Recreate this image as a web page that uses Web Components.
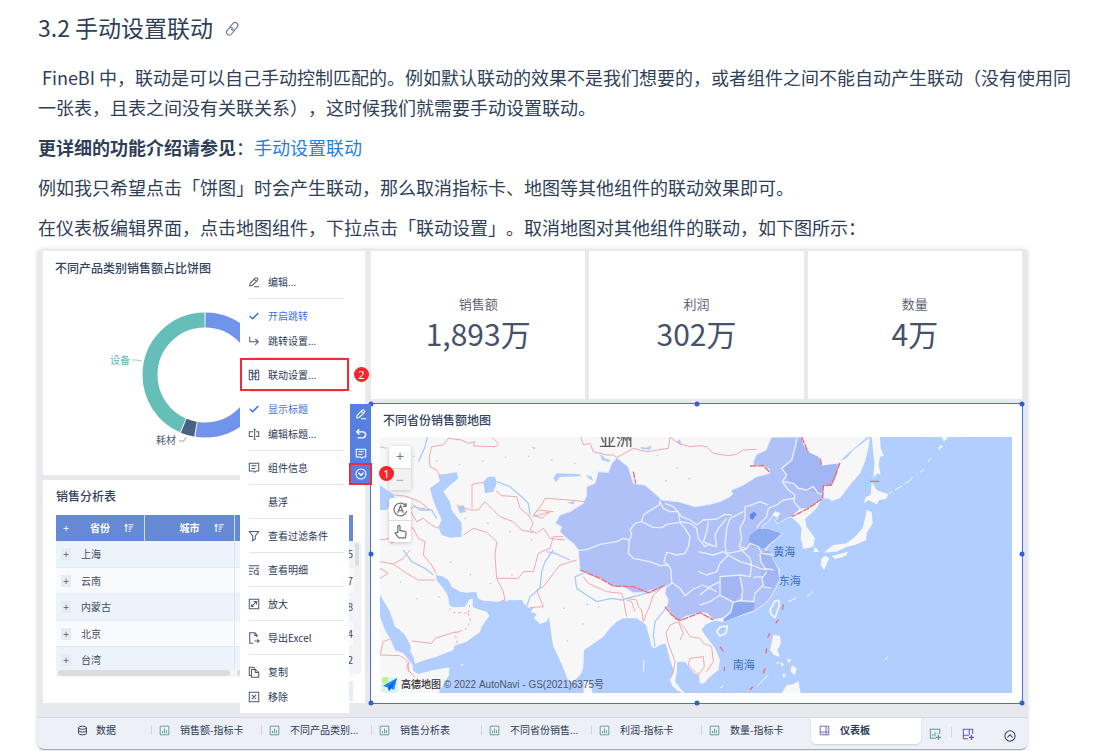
<!DOCTYPE html>
<html lang="zh-CN">
<head>
<meta charset="utf-8">
<title>3.2 手动设置联动</title>
<style>
html{background:#fff}
body{margin:0;color:#2f3f58;font-family:"Noto Sans CJK SC","Noto Sans",sans-serif;text-spacing-trim:space-all}
</style>
</head>
<body>
<help-article></help-article>
<script>
function define(tag, css, html, setup) {
  const tpl = document.createElement('template');
  tpl.innerHTML = '<style>*{box-sizing:border-box}button{font:inherit;color:inherit;background:none;border:0;margin:0;padding:0;text-align:left;cursor:pointer}' + css + '</style>' + html;
  customElements.define(tag, class extends HTMLElement {
    constructor() {
      super();
      this.attachShadow({ mode: 'open' }).append(tpl.content.cloneNode(true));
    }
    connectedCallback() { if (setup) setup(this, this.shadowRoot); }
  });
}

const ICONS = {
  link: '<g transform="rotate(-50 7 7)" stroke-width="1.100"><path d="M8 9.800H2.800A2.800 2.800 0 0 1 2.800 4.200H5.500A2.800 2.800 0 0 1 8 8"/><path d="M6 4.200H11.200A2.800 2.800 0 0 1 11.200 9.800H8.500A2.800 2.800 0 0 1 6 6" transform="translate(.5 0)"/></g>',
  edit: '<path d="M2 11.500 2.500 8.500 8.500 2.500Q9.500 1.500 10.500 2.500L11 3Q12 4 11 5L5 11ZM7.300 3.800 9.800 6.300M7 12.500H13"/>',
  check: '<path stroke-width="1.800" d="M2 7 5.300 10.200 12 3.500"/>',
  turn: '<path d="M2 2V8H12M8.500 4.500 12 8 8.500 11.500"/>',
  linkage: '<path d="M1.500 1.500H5.500V12.500H1.500ZM8.500 1.500H12.500V12.500H8.500ZM3.500 5.500H10.500M3.500 9H10.500M1.500 4H5.500M8.500 4H12.500"/>',
  rename: '<path d="M6 4.500H1.500V10H6M9.500 4.500H12.500V10H9.500M7.800 1.500V13M6.500 1.500H9M6.500 13H9"/>',
  comment: '<path d="M1.500 1.500H12.500V10.500H9.500L8 12 6.500 10.500H1.500ZM4 4.500H10M4 7.500H8.500"/>',
  filter: '<path d="M1.500 1.800H12.500L8.500 6.800V10.500L5.500 12.500V6.800Z"/>',
  detail: '<path d="M1 2H13M1 5H7M1 8.500H5.500M1 12H5M12.500 13 11 11.500M13 5H9"/><circle cx="9.500" cy="9.500" r="2.500"/>',
  enlarge: '<path d="M1.500 1.500H12.500V12.500H1.500ZM4 10 10 4M6.500 4H10V7.500M4 7.500V10H6.500"/>',
  export: '<path d="M10.500 6V3.500L8 1H2V13H6M8 1V4H10.500M7.500 10.500H13M11 8.500 13 10.500 11 12.500"/>',
  copy: '<path d="M4 4H8.500L12.500 7.500V13H4ZM8.500 4V7.500H12.500M4 11H1.500V1.500H6.500L8.500 3"/>',
  remove: '<path d="M1.500 1.500H12.500V12.500H1.500ZM4.500 4.500 9.500 9.500M9.500 4.500 4.500 9.500"/>',
  undo: '<path stroke-width="1.600" d="M5 1.500 2 4.500 5 7.500M2 4.500H9C13.500 4.500 13.500 11.500 9 11.500H3"/>',
  down: '<circle cx="7" cy="7" r="5.800"/><path stroke-width="1.500" d="M4 5.500 7 8.500 10 5.500"/>',
  up: '<circle cx="7" cy="7" r="6"/><path d="M4 8.500 7 5.500 10 8.500"/>',
  data: '<ellipse cx="7" cy="3.500" rx="5" ry="2"/><path d="M2 3.500V10.500Q2 12.500 7 12.500T12 10.500V3.500M2 7Q2 9 7 9T12 7"/>',
  chart: '<g stroke="#5f9c92"><path d="M1.500 1.500H12.500V12.500H1.500Z"/><path d="M4.500 10.500V7.500M7 10.500V4.500M9.500 10.500V6.500"/></g>',
  board: '<g stroke="#7460b8"><path d="M1.500 1.500H12.500V12.500H1.500ZM9 1.500V12.500M1.500 9H12.500"/><path stroke="#b7abda" d="M9 5H12.500M5 9V12.500"/></g>',
  addchart: '<g stroke="#5f9c92"><path d="M8 12H1.500V1.500H12.500V7M4.500 9.500V7M7 9.500V5M9.500 7V6"/><path stroke-width="1.500" d="M11 8V14M8 11H14"/></g>',
  addboard: '<g stroke="#6a55b3"><path d="M7 12.500H1.500V1.500H12.500V7M8.500 1.500V8M1.500 8.500H8"/><path stroke-width="1.500" d="M11 8V14M8 11H14"/></g>',
  sort: '<path stroke-width="1.500" d="M3 12.500V2M1 4.500 3 2 5 4.500M6.500 2.500H13.500M6.500 5.500H12M6.500 8.500H10.500M6.500 11.500H9"/>',
  compass: '<path d="M11.500 3A6 6 0 1 0 12.800 8.500M12.200 1V4H9.200M4.300 10 7 3.500 9.700 10M5.300 8H8.700"/>',
  hand: '<path d="M4.500 8.500V2Q5.500 .5 6.500 2V6L11.500 7Q12.500 7.300 12.200 9L11.500 13H5.500L2 8.800Q2.500 7 4.500 8.500"/>'
};
define('ui-icon', ':host{display:inline-block;width:14px;height:14px;flex:none}svg{display:block;width:100%;height:100%;overflow:visible}',
  '<svg viewBox="0 0 14 14" fill="none" stroke="currentColor" stroke-width="1.200" aria-hidden="true"></svg>',
  (el, r) => { r.querySelector('svg').innerHTML = ICONS[el.getAttribute('name')] || ''; });

define('step-badge', ':host{display:grid;place-items:center;width:15px;height:15px;border-radius:50%;background:#f8242c;color:#fff;font:11px/15px "Noto Sans",sans-serif}', '<slot></slot>');

define('panel-card', ':host{display:flex;flex-direction:column;background:#fff;position:relative}h3{margin:0;padding-left:var(--title-inset,0);font-size:12px;line-height:18px;font-weight:500;color:#33435e}h3:empty{display:none}',
  '<h3></h3><slot></slot>', (el, r) => { r.querySelector('h3').textContent = el.getAttribute('heading') || ''; });

define('kpi-card', ':host{display:flex;flex-direction:column;align-items:center;justify-content:center;background:#fff;height:148px;padding-bottom:4px;box-sizing:border-box;flex:1 1 0;color:#46526a}span{font-size:13px;line-height:20px;color:#5b6474}strong{font-size:30px;line-height:38px;font-weight:400}',
  '<span></span><strong><slot></slot></strong>', (el, r) => { r.querySelector('span').textContent = el.getAttribute('label'); });

define('donut-chart', ':host{display:block}svg{display:block}text{font:10px "Noto Sans CJK SC",sans-serif}',
  `<svg width="290" height="170" viewBox="0 0 290 170" role="img" aria-label="饼图">
  <g transform="translate(150 85) rotate(-90)" fill="none" stroke-width="15">
   <circle r="55" pathLength="360" stroke="#7093ec" stroke-dasharray="188.500 171.500" stroke-dashoffset="-.5"/>
   <circle r="55" pathLength="360" stroke="#4c6083" stroke-dasharray="12.800 347.200" stroke-dashoffset="-190"/>
   <circle r="55" pathLength="360" stroke="#66beb8" stroke-dasharray="155.700 204.300" stroke-dashoffset="-203.800"/>
  </g>
  <g fill="none" stroke="#a9cfcc"><path d="M77 70H81L87 71"/><path stroke="#9aa3b5" d="M124 151H129L131 147"/></g>
  <text x="55" y="74" fill="#5cb5ad">设备</text><text x="101" y="154" fill="#4c5a74">耗材</text></svg>`);

define('menu-item', ':host{display:block}button{display:grid;grid-template-columns:12px 1fr;column-gap:8px;align-items:center;width:100%;height:25px;padding-left:8px;font-size:10px;line-height:16px;white-space:nowrap;color:#2c3b57}:host([checked]) button{color:#3f72e0}:host([marked]) button{outline:2px solid #f32c33;outline-offset:-2px;height:33px;margin:-4px 0}ui-icon{width:12px;height:12px;color:#4a5a76}:host([checked]) ui-icon{color:#3f72e0}',
  '<button type="button"><ui-icon></ui-icon><span><slot></slot></span></button>',
  (el, r) => { const i = r.querySelector('ui-icon'), n = el.getAttribute('icon'); if (n) { const c = document.createElement('ui-icon'); c.setAttribute('name', n); i.replaceWith(c); } });

define('context-menu', ':host{display:block;width:109px;background:#fff;padding:0 0 4px}hr{border:0;border-top:1px solid #e4e6ea;margin:4px 5px 4px 9px}step-badge{position:absolute;left:114px;top:98px}',
  `<menu-item icon="edit">编辑...</menu-item><hr>
  <menu-item icon="check" checked>开启跳转</menu-item><menu-item icon="turn">跳转设置...</menu-item><hr>
  <menu-item icon="linkage" marked>联动设置...</menu-item><hr>
  <menu-item icon="check" checked>显示标题</menu-item><menu-item icon="rename">编辑标题...</menu-item><hr>
  <menu-item icon="comment">组件信息</menu-item><hr><menu-item>悬浮</menu-item><hr>
  <menu-item icon="filter">查看过滤条件</menu-item><hr><menu-item icon="detail">查看明细</menu-item><hr>
  <menu-item icon="enlarge">放大</menu-item><hr><menu-item icon="export">导出Excel</menu-item><hr>
  <menu-item icon="copy">复制</menu-item><menu-item icon="remove">移除</menu-item><step-badge>2</step-badge>`);

const row = (n, v) => `<tr><td><span class="cell"><button type="button" aria-label="展开">+</button>${n}</span></td><td></td><td class="num">${v}</td></tr>`;
define('sales-table', `:host{display:grid;grid-template-columns:1fr 8px;font-size:10px;line-height:16px;color:#3f4c62}
 table{width:100%;border-collapse:separate;border-spacing:0;table-layout:fixed}
 th{height:26px;background:#6589d4;color:#fff;font-weight:700;padding:0;border-right:1px solid #cfdbf4}th:last-child{border:0}
 th:nth-child(1){width:89px}th:nth-child(2){width:90px}
 .head{display:grid;grid-template-columns:20px 1fr 20px;align-items:center;text-align:center}.head ui-icon{width:10px;height:10px}.head span:first-child{font-weight:400}
 td{height:27px;padding:0;border-bottom:1px solid #e6ecf6;background:#f8fafe}tr:nth-child(odd) td{background:#edf3fb}tr:nth-child(even) td{height:26px}td:nth-child(2){border-right:1px solid #dce4f0}
 .cell{display:flex;align-items:center;gap:10px;padding-left:5px}.cell button{width:10px;height:12px;line-height:10px;text-align:center;background:#e7ecf3;color:#526077}
 .num{text-align:right}.v{margin-top:26px;background:#f3f3f4;border-radius:3px;padding:2px}.v i{display:block;height:23px;border-radius:3px;background:#dcdde1}
 .bars{display:grid;grid-template-columns:179px 1fr;height:7px;margin-top:-4px;position:relative;background:#f5f5f6;padding-bottom:1px}.bars i{background:#dcdde0;border-radius:3px;margin:0 5px 0 2px}.total{height:20px;margin:4px 0 0 190px;background:#e6edf8}`,
 `<table><thead><tr><th><span class="head"><span>+</span><span>省份</span><ui-icon name="sort"></ui-icon></span></th><th><span class="head"><span></span><span>城市</span><ui-icon name="sort"></ui-icon></span></th><th></th></tr></thead>
 <tbody>${row('上海', 5)}${row('云南', 7)}${row('内蒙古', 8)}${row('北京', 4)}${row('台湾', 2)}</tbody></table><div class="v"><i></i></div>
 <div><div class="bars"><i></i><i></i></div><div class="total"></div></div>`);

define('tool-strip', ':host{display:flex;flex-direction:column;width:21px;background:#5680df;color:#fff}button{display:grid;place-items:center;height:20px}button:last-of-type{outline:2px solid #f32c33;outline-offset:-1px}ui-icon{width:12px;height:12px}step-badge{position:absolute;left:29px;top:62px}',
 '<button aria-label="编辑"><ui-icon name="edit"></ui-icon></button><button aria-label="撤销"><ui-icon name="undo"></ui-icon></button><button aria-label="备注"><ui-icon name="comment"></ui-icon></button><button aria-label="更多"><ui-icon name="down"></ui-icon></button><step-badge>1</step-badge>');

define('sales-map', `:host{display:block;position:relative;height:256px;overflow:hidden}svg.map{display:block;width:100%;height:100%}
 .ctl{position:absolute;left:9px;display:grid;width:22px;border-radius:3px;background:#fff;box-shadow:0 1px 4px #0003;color:#747474}
 .ctl button{height:22px;display:grid;place-items:center;font:14px/20px "Noto Sans",sans-serif}.ctl button+button{border-top:1px solid #ddd}.zoom{top:9px}.zoom button+button{background:#f2f2f2;color:#aaa}.mode{top:61px}.mode ui-icon{width:15px;height:15px}
 .credit{position:absolute;left:2px;bottom:0;display:flex;align-items:center;gap:3px;font:10px/16px "Liberation Sans","Noto Sans CJK SC",sans-serif;color:#4d5666;white-space:nowrap}
 .credit b{font-weight:500;color:#333}text{font-family:"Noto Sans CJK SC",sans-serif;font-size:33px;fill:#3d70bd}`,
`<svg class="map" viewBox="30 126 1896 768" preserveAspectRatio="xMidYMid slice" role="img" aria-label="地图" stroke-linejoin="round">
<rect x="30" y="126" width="1896" height="768" fill="#f7f7f7"/>
<g fill="#b1ceff">
<path d="M205 895 220 870 237 840 238 817 190 825 145 837 130 828 128 810 100 775 75 765 60 730 45 705 30 665V600L45 625 60 650 75 695 90 705 105 720 123 755 121 770 130 785 135 806 165 795 200 785 250 765 254 752 290 740 312 724 330 712 335 695 358 662 350 650 325 643 308 635 308 610 298 614 285 635 250 637 238 630 235 605 220 580 200 555 197 540 215 543 235 555 245 575 270 590 292 593 318 590 325 611 340 617 385 620 420 616 455 615 470 637 490 640 482 650 500 657 492 670 510 687 530 680 537 665 545 725 550 755 565 785 580 820 595 857 610 860 635 835 640 815 642 765 665 750 700 725 720 700 740 680 760 670 800 670 815 680 828 690 835 715 845 755 855 760 870 750 885 745 890 755 900 795 912 830 900 855 905 870 920 885 940 895 945 895 930 880 915 860 920 835 922 800 945 800 960 820 975 837 988 840 990 860 1000 866 1015 850 1045 825 1050 795 1035 760 1005 720 995 705 1005 690 1025 680 1035 677 1060 680 1100 665 1150 650 1180 630 1200 610 1220 575 1228 555 1230 525 1215 505 1195 480 1190 460 1235 415 1225 412 1170 400 1185 380 1205 360 1230 370 1262 367 1270 372 1285 385 1295 400 1292 430 1300 462 1330 455 1335 430 1310 395 1305 372 1340 340 1355 312 1375 310 1385 318 1410 310 1440 270 1470 235 1485 200 1495 160 1500 126H1926V894Z"/>
<path d="M205 240 230 236 260 232 265 250 235 275 220 290 240 320 245 345 260 365 275 385V425L240 428 215 420 205 395 215 375 195 330 185 300 180 280 210 258ZM340 260 355 245 375 245 380 265 370 290 345 295ZM30 270 50 285 75 300 65 320 50 345 30 345ZM262 335 280 330 288 350 270 355ZM550 250 560 235 630 238 632 244 570 246 558 262ZM590 323 615 318 610 328ZM650 240 665 245 670 258 655 250ZM920 140 930 132 935 155ZM690 175 705 190 720 195 718 202 695 195ZM810 155 830 158 845 150 840 164 815 162ZM484 155 498 158 492 163ZM1410 198 1440 170 1492 126 1502 126 1450 165 1430 190Z"/>
</g>
<g fill="#f7f7f7">
<path d="M1505 126 1530 126 1532 160 1541 183 1530 185 1526 210 1532 240 1524 235 1510 248 1513 205ZM1505 260 1520 285 1555 298 1548 312 1528 315 1520 328 1495 315 1482 325 1487 306 1502 300ZM1490 345 1505 350 1508 385 1490 415 1488 435 1455 450 1430 455 1400 470 1360 473 1390 450 1430 445 1455 425 1478 400 1485 370ZM1355 490 1365 482 1378 490 1362 525 1352 510ZM1385 483 1435 470 1428 482 1395 493ZM1715 126H1735L1722 140ZM1705 160 1713 150 1718 154 1708 164Z"/>
<path d="M1210 720 1230 722 1233 745 1222 765 1230 785 1212 780 1200 765ZM1250 870 1270 868 1285 858 1292 894H1235ZM1265 810 1280 820 1275 840 1262 830ZM1230 800 1242 808 1236 815ZM1238 835 1248 840 1240 850ZM1250 790 1264 796 1256 804ZM1222 797 1228 805 1220 808ZM642 860 660 858 668 894H640ZM988 840 1012 842 1008 860 990 866ZM270 810 284 808 276 813ZM1335 455 1348 470 1330 472Z"/>
<path fill="none" d="M1160 875 1195 840M820 830 822 795M1050 880 1060 872M1312 605 1328 590M1255 620 1280 608M1545 795 1552 785M1558 296 1566 288M1575 284 1598 272M1604 265 1618 259 1628 246M1650 232 1662 222M1675 200 1682 190" stroke="#f7f7f7" stroke-width="3"/>
</g>
<path fill="#b0c1f7" stroke="#e7edff" stroke-width="3" d="M740 188 755 200 775 215 790 265 825 270 860 300 875 315 925 320 975 335 1020 328 1050 320 1080 305 1088 297 1083 286 1120 270 1160 245 1198 235 1198 222 1180 212 1150 213 1150 200 1160 178 1188 165 1198 140 1205 126H1294L1300 150 1315 172 1345 185 1355 212 1400 206 1410 203 1400 240 1385 270 1360 272 1358 310 1340 325 1315 340 1290 342 1265 365 1250 370 1225 385 1215 380 1230 355 1215 350 1195 380 1178 392 1175 405 1195 402 1235 415 1230 425 1195 450 1185 462 1205 485 1217 508 1224 525 1230 555 1218 578 1200 610 1180 630 1150 650 1100 665 1062 680 1060 668 1030 675 1012 655 990 653 945 665 930 677 915 675 905 660 890 635 895 615 885 595 890 570 860 580 820 593 790 593 760 575 730 573 690 550 660 540 630 525 625 465 610 445 590 430 570 410 575 395 555 385 570 360 600 350 640 325 650 300 650 275 675 265 685 230 715 232 725 205Z"/>
<path fill="#a2b6f4" d="M1280 145 1294 128 1300 150 1315 172 1345 185 1355 212 1400 206 1400 240 1385 270 1360 272 1358 298 1310 285 1260 260 1235 225 1265 200ZM1045 545 1110 540 1115 590 1095 620 1050 600ZM1170 480 1195 465 1225 525 1228 555 1205 585 1180 575 1175 540Z"/>
<path fill="#8da9f0" d="M1140 420 1165 402 1195 402 1235 415 1200 445 1185 460 1150 455 1135 440ZM1090 620 1110 620 1155 625 1150 645 1100 665 1062 680 1060 672 1085 655Z"/>
<path fill="#5f88e9" d="M1140 358 1152 350 1160 358 1148 374 1140 370Z"/>
<g fill="none" stroke="#e9efff" stroke-width="4">
<path d="M625 467 650 464 690 448 740 440 760 430 778 435 785 420 780 405 795 385 815 380 820 360 850 340 868 330 870 316M815 380 850 397 875 398 890 388 930 382 945 400 960 425 955 455 945 475 920 480 890 472 882 500 895 510M778 435 775 475 790 490 840 500 870 512 895 510 903 525 905 565 892 575M905 562 930 580 945 602 970 582 1000 570 1020 580 1040 590M868 316 880 340 900 350 925 350 930 380 960 385 980 400 985 430 1005 455 1020 445M885 325 910 335 935 365 960 375 980 390 1000 375 1040 372 1065 358 1085 360"/>
<path d="M1280 130 1275 160 1265 195 1235 220 1250 240 1237 260 1270 265 1285 280 1310 285 1330 275 1345 295 1360 297M1237 260 1255 285 1275 300 1272 320 1290 342M1272 310 1240 315 1220 330 1195 340 1190 365 1170 385 1160 400M1195 330 1170 320 1145 330 1125 335 1125 370 1110 400 1115 430 1108 455 1130 460 1140 445 1165 455 1175 475 1210 480M1120 350 1080 370 1070 400 1065 450 1070 475 1100 470 1130 462M1015 380 1010 410 1000 440 1020 450 1040 455 1035 420 1045 400 1070 370"/>
<path d="M985 470 1030 480 1060 470 1075 480 1050 505 1040 530 1010 540 985 530M1075 480 1110 500 1145 510 1140 545 1110 540 1050 545 1050 560 1020 575 990 600M1110 460 1140 490 1145 510 1170 520 1190 525M1170 475 1172 500 1185 520 1210 525M1190 530 1180 545 1150 547M1175 545 1180 570 1155 595 1150 622M1110 545 1118 585 1115 615 1090 622 1050 600 1020 620 990 630M1090 622 1082 650 1060 670M1180 575 1205 580M1050 548 1050 600M1110 617 1155 620"/>
</g>
<path fill="#b1ceff" stroke="#f5f7ff" stroke-width="5" d="M1200 645 1215 618 1226 616 1228 630 1215 668 1203 657ZM1040 710 1050 696 1072 693 1068 715 1050 723Z"/>
<g fill="none" stroke="#f2a8b2" stroke-width="3">
<path d="M210 244 200 225 180 215 178 185 185 155 220 150 235 130 275 135 295 145 315 140 310 153 380 155 385 145 365 126M632 126 640 150 660 145 670 170 710 180 730 180 740 188 790 160 830 170 895 160 900 126 925 145 960 155 990 152 1010 155 1030 175 1075 182 1100 178 1120 165 1160 163M30 155 50 160M306 340V268L340 262M378 288 395 302 440 305 450 340 475 360 490 385 480 405 500 415 520 400 540 430 585 435M260 330 300 345 325 345 345 320 360 335 390 365 430 380 455 405 490 413M280 420 310 400 350 412 380 440 375 480 380 550 445 550 460 530 490 530 505 475 540 460 550 425 580 425M75 300 105 303 150 320 180 345 130 335 120 345 140 380 160 370 185 390 205 400M85 370 95 390 130 400 145 430 165 440 160 480 185 510 198 535M490 360 515 330 525 310 600 315 645 320M490 365 540 350 515 370 490 360 505 345 550 350M30 435 60 430 65 445 100 425 110 440"/>
<path d="M30 500 70 507 110 535 145 555 195 555M70 507 100 490 120 465M30 520 55 535 30 550M125 738 185 745 195 730 250 713 270 710M30 780 90 782 115 800 115 830M30 780 40 740 60 732M115 800 110 820 135 848M380 550 400 590 405 615 390 620M480 638 520 635 500 585 520 575 570 510 620 495M640 545 655 565 710 590 755 595 760 610 765 640 770 665M770 610 800 615 805 635 815 645 820 680 840 630 850 600 885 570M770 615 785 620 795 650M900 690 925 680 945 700 960 725 990 730 1000 745 1025 755 1030 800 1010 830M900 690 888 715 895 745 915 800 910 830 900 850M960 790 1000 785 1003 815 985 840 955 810ZM925 680 940 715 930 735"/>
<path stroke-dasharray="8 8" d="M238 640 250 652 295 655 300 625M295 655 302 680 290 700 265 710 255 712 262 745"/>
</g>
<g fill="none" stroke="#a9ccfb" stroke-width="4"><path d="M145 200 165 155 172 126M380 260 420 275 455 305 475 325 480 360M470 635 480 605 510 580 515 530 525 500 550 465M640 535 615 545 620 580 650 600 680 620 725 610 755 615 790 605 850 590 890 570M855 755 850 720 855 680 880 650 890 635M100 465 125 500 165 520 190 540M130 330 150 345 185 345 200 370M530 470 555 475 600 495"/></g>
<g fill="none" stroke="#ee6a74" stroke-width="4"><g stroke-dasharray="20 3"><path d="M630 525 690 550 730 573 790 575 835 593 885 570M885 635 905 660 930 677 990 653 1030 675M1140 213 1180 212 1198 230M1295 126 1315 172M1350 190 1355 210M1410 203 1385 270 1360 272 1358 310 1315 340 1265 365M790 230 797 265"/></g><path d="M1240 628 1237 645M1226 674 1217 685M1200 714 1193 728M1190 760 1188 775M1185 820 1180 835M1050 755 1060 770M1063 815V828M1148 875 1140 885M1500 259H1528"/></g>
<path fill="none" stroke="#b1ceff" stroke-width="4" stroke-dasharray="5 65" d="M60 170 260 210 450 180 650 210M80 320 165 350 340 380 500 440M90 560 150 620 230 600M240 500 350 570 450 530M580 640 700 620 590 740M860 180 970 250 860 260"/>
<text x="688" y="153" style="font-size:50px;fill:#555">亚洲</text><text x="1210" y="482">黄海</text><text x="1226" y="570">东海</text><text x="1088" y="822">南海</text>
</svg>
<div class="ctl zoom"><button aria-label="放大">+</button><button aria-label="缩小">−</button></div>
<div class="ctl mode"><button aria-label="方向"><ui-icon name="compass"></ui-icon></button><button aria-label="手势"><ui-icon name="hand"></ui-icon></button></div>
<div class="credit"><svg width="16" height="16" viewBox="0 0 16 16" aria-hidden="true"><rect width="16" height="16" rx="3" fill="#dbf3ec"/><path d="M0 6V3Q0 0 3 0H6V7Z" fill="#b8f68c"/><path d="M15 1 1 9 6 10.500 7 14 9 11.500 12 13Z" fill="#1485fb"/><path d="M9 11.500 15 1 6 10.500 7 14Z" fill="#0565df"/></svg><span><b>高德地图</b> © 2022 AutoNavi - GS(2021)6375号</span></div>`);

define('sheet-tab', ':host{display:block;flex:0 1 110px;min-width:0}button{display:flex;align-items:center;gap:10px;width:100%;height:26px;padding:0 0 2px 8px;font-size:10px;line-height:16px;white-space:nowrap;color:#2c3b57;position:relative}button::before{content:"";width:1px;height:10px;background:#cfd6df;position:absolute;left:0}ui-icon{width:11px;height:11px}:host([plain]) button::before,:host([active]) button::before{display:none}:host([active]) button{background:#fff;border-radius:0 0 5px 5px;font-weight:700;box-shadow:0 1px 2px #0002}:host([plain]) button{padding-left:39px;gap:8px}',
 '<button type="button"><ui-icon></ui-icon><span><slot></slot></span></button>',
 (el, r) => { const c = document.createElement('ui-icon'); c.setAttribute('name', el.getAttribute('icon') || 'chart'); r.querySelector('ui-icon').replaceWith(c); });

define('sheet-bar', ':host{display:flex;height:33px;border-top:1px solid #d6dce6;background:#edf0f6;border-radius:0 0 6px 6px;border-bottom:1px solid #a5abb5}sheet-tab[plain]{flex-basis:113px}.actions{display:flex;flex:1;align-items:center;gap:10px;padding:0 11px 0 8px;height:28px}.actions i{width:1px;height:10px;background:#cfd6df}.actions ui-icon{width:12px;height:12px}.actions button:last-child{margin-left:auto;padding-top:4px}',
 `<sheet-tab plain icon="data">数据</sheet-tab><sheet-tab>销售额-指标卡</sheet-tab><sheet-tab>不同产品类别...</sheet-tab><sheet-tab>销售分析表</sheet-tab><sheet-tab>不同省份销售...</sheet-tab><sheet-tab>利润-指标卡</sheet-tab><sheet-tab>数量-指标卡</sheet-tab><sheet-tab active icon="board">仪表板</sheet-tab>
 <div class="actions"><button aria-label="添加组件"><ui-icon name="addchart"></ui-icon></button><i></i><button aria-label="添加仪表板"><ui-icon name="addboard"></ui-icon></button><button aria-label="收起"><ui-icon name="up"></ui-icon></button></div>`);

define('bi-dashboard', `:host{display:block;background:#e8e9ed;border-radius:3px 3px 6px 6px;box-shadow:0 0 5px #0003}
 .board{display:grid;grid-template-columns:322fr 651fr;gap:6px;padding:1px 5px 14px}
 .left,.right{display:flex;flex-direction:column;gap:5px;position:relative;min-width:0}
 .kpis{display:flex;gap:4px}.pie{height:224px;padding:8px 12px 0}.pie donut-chart{margin-top:13px}
 .list{flex:1;padding:7px 4px 0 13px}.list sales-table{margin-top:10px}
 context-menu{position:absolute;right:16px;top:18px;z-index:2}
 .mapcard{--title-inset:3px;padding:7px 10px 10px 9px;outline:1px solid #4671da;height:299px}.mapcard sales-map{margin-top:8px}
 tool-strip{position:absolute;left:-21px;top:0;z-index:3}
 .dot{position:absolute;width:5px;height:5px;border-radius:50%;background:#2f5fdc;transform:translate(-50%,-50%)}`,
 `<div class="board"><div class="left"><panel-card class="pie" heading="不同产品类别销售额占比饼图"><donut-chart></donut-chart></panel-card>
 <panel-card class="list" heading="销售分析表"><sales-table></sales-table></panel-card><context-menu></context-menu></div>
 <div class="right"><div class="kpis"><kpi-card label="销售额">1,893万</kpi-card><kpi-card label="利润">302万</kpi-card><kpi-card label="数量">4万</kpi-card></div>
 <panel-card class="mapcard" heading="不同省份销售额地图"><sales-map></sales-map><tool-strip></tool-strip></panel-card></div></div><sheet-bar></sheet-bar>`,
 (el, r) => {
  const card = r.querySelector('.mapcard');
  if (card.querySelector('.dot')) return;
  for (const [x, y] of [[0,0],[50,0],[100,0],[0,50],[100,50],[0,100],[50,100],[100,100]]) {
    const d = document.createElement('i'); d.className = 'dot'; d.style.left = x + '%'; d.style.top = y + '%'; card.append(d);
  }
 });

define('help-article', `:host{display:block;padding:12px 18px 1px 38px;font-size:18px;line-height:30px}
 h2{margin:0 0 20px;font-size:23px;line-height:30px;font-weight:400;display:flex;align-items:center;gap:12px}h2 a{color:#6d7a8e;display:flex;padding-top:4px}
 p{margin:0 0 10px}a{color:#1f80ec;text-decoration:none}figure{margin:0 50px 0 0}p:last-of-type{margin-bottom:8px}`,
 `<h2>3.2 手动设置联动 <a href="#linkage" aria-label="链接"><ui-icon name="link"></ui-icon></a></h2>
 <p>&nbsp;FineBI 中&#xFF0C;联动是可以自己手动控制匹配的。例如默认联动的效果不是我们想要的&#xFF0C;或者组件之间不能自动产生联动&#xFF08;没有使用同一张表&#xFF0C;且表之间没有关联关系&#xFF09;&#xFF0C;这时候我们就需要手动设置联动。</p>
 <p><strong>更详细的功能介绍请参见</strong>&#xFF1A;<a href="#manual">手动设置联动</a></p>
 <p>例如我只希望点击「饼图」时会产生联动&#xFF0C;那么取消指标卡、地图等其他组件的联动效果即可。</p>
 <p>在仪表板编辑界面&#xFF0C;点击地图组件&#xFF0C;下拉点击「联动设置」。取消地图对其他组件的联动&#xFF0C;如下图所示&#xFF1A;</p>
 <figure><bi-dashboard></bi-dashboard></figure>`);
</script>
</body>
</html>
